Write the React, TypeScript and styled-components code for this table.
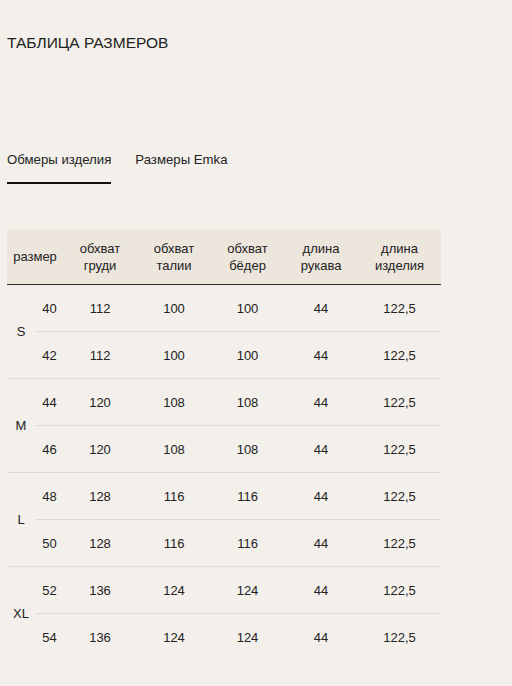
import React from "react";
import styled, { createGlobalStyle } from "styled-components";

const Global = createGlobalStyle`
  html, body { margin: 0; padding: 0; background: #f3f0eb; }
  body { font-family: "Liberation Sans", Arial, sans-serif; color: #222; }
`;

const Page = styled.div`
  width: 512px;
  height: 686px;
  box-sizing: border-box;
  padding: 34px 7px 0 7px;
  overflow: hidden;
  background: #f3f0eb;
`;

const Title = styled.h1`
  margin: 0;
  font-size: 15.5px;
  font-weight: normal;
  line-height: 17px;
  text-transform: uppercase;
  letter-spacing: 0;
`;

const Tabs = styled.div`
  display: flex;
  gap: 24px;
  margin-top: 101px;
`;

const Tab = styled.div<{ $active?: boolean }>`
  font-size: 13.2px;
  line-height: 15px;
  padding-bottom: 15px;
  border-bottom: 2px solid ${(p) => (p.$active ? "#111" : "transparent")};
`;

const Table = styled.table`
  margin-top: 45px;
  width: 434px;
  border-collapse: collapse;
  table-layout: fixed;
  font-size: 13px;
`;

const Head = styled.thead`
  background: #ede6dd;
`;

const Th = styled.th`
  font-weight: normal;
  height: 55px;
  line-height: 17px;
  text-align: center;
  padding: 0;
  border-bottom: 1px solid #2a2a2a;
`;

const Td = styled.td<{ $border?: boolean }>`
  height: 46px;
  padding: 0;
  text-align: center;
  border-bottom: ${(p) => (p.$border ? "1px solid #dedad4" : "none")};
`;

const SizeTd = styled(Td)`
  padding-right: 1px;
`;

const groups = [
  { s: "S", rows: [["40", "112", "100", "100", "44", "122,5"], ["42", "112", "100", "100", "44", "122,5"]] },
  { s: "M", rows: [["44", "120", "108", "108", "44", "122,5"], ["46", "120", "108", "108", "44", "122,5"]] },
  { s: "L", rows: [["48", "128", "116", "116", "44", "122,5"], ["50", "128", "116", "116", "44", "122,5"]] },
  { s: "XL", rows: [["52", "136", "124", "124", "44", "122,5"], ["54", "136", "124", "124", "44", "122,5"]] },
];

export default function App() {
  return (
    <Page>
      <Global />
      <Title>Таблица размеров</Title>
      <Tabs>
        <Tab $active>Обмеры изделия</Tab>
        <Tab>Размеры Emka</Tab>
      </Tabs>
      <Table>
        <colgroup>
          <col style={{ width: 29 }} />
          <col style={{ width: 27 }} />
          <col style={{ width: 74 }} />
          <col style={{ width: 74 }} />
          <col style={{ width: 73 }} />
          <col style={{ width: 74 }} />
          <col style={{ width: 83 }} />
        </colgroup>
        <Head>
          <tr>
            <Th colSpan={2}>размер</Th>
            <Th>обхват<br />груди</Th>
            <Th>обхват<br />талии</Th>
            <Th>обхват<br />бёдер</Th>
            <Th>длина<br />рукава</Th>
            <Th>длина<br />изделия</Th>
          </tr>
        </Head>
        <tbody>
          {groups.map((g, gi) => {
            const last = gi === groups.length - 1;
            return g.rows.map((r, ri) => (
              <tr key={g.s + ri}>
                {ri === 0 && (
                  <SizeTd rowSpan={2} $border={!last}>{g.s}</SizeTd>
                )}
                {r.map((v, ci) => (
                  <Td key={ci} $border={ri === 0 || !last}>{v}</Td>
                ))}
              </tr>
            ));
          })}
        </tbody>
      </Table>
    </Page>
  );
}
